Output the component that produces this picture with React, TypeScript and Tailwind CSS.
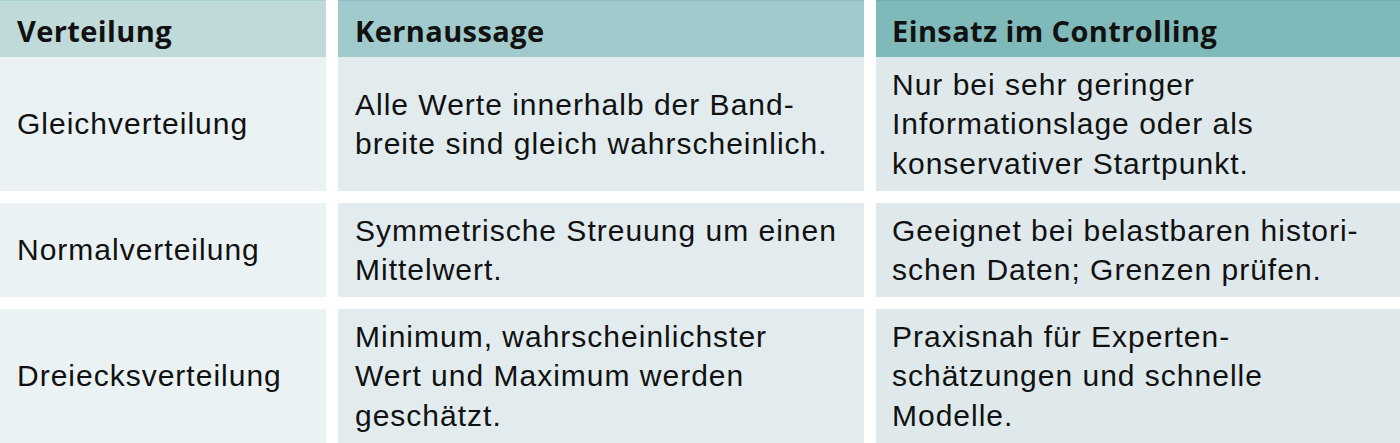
import React from "react";

type Row = { name: string; core: string[]; use: string[] };

const rows: Row[] = [
  {
    name: "Gleichverteilung",
    core: ["Alle Werte innerhalb der Band-", "breite sind gleich wahrscheinlich."],
    use: ["Nur bei sehr geringer", "Informationslage oder als", "konservativer Startpunkt."],
  },
  {
    name: "Normalverteilung",
    core: ["Symmetrische Streuung um einen", "Mittelwert."],
    use: ["Geeignet bei belastbaren histori-", "schen Daten; Grenzen prüfen."],
  },
  {
    name: "Dreiecksverteilung",
    core: ["Minimum, wahrscheinlichster", "Wert und Maximum werden", "geschätzt."],
    use: ["Praxisnah für Experten-", "schätzungen und schnelle", "Modelle."],
  },
];

const body = "font-['Liberation_Sans',Arial,sans-serif] text-[30px] leading-[39.5px] tracking-[1px] text-[#111]";
const head = "font-['Open_Sans',sans-serif] font-bold text-[29px] tracking-[0.4px] text-[#111]";

const Lines = ({ lines }: { lines: string[] }) => (
  <div className="whitespace-nowrap">
    {lines.map((l, i) => (
      <div key={i}>{l}</div>
    ))}
  </div>
);

export default function App() {
  return (
    <div className="w-[1400px] h-[443px] bg-white overflow-hidden">
      {/* Kopfzeile */}
      <div className="grid grid-cols-[326px_526px_524px] gap-x-3 h-[57px]">
        <div className={`${head} flex items-center pl-[17px] pt-[3px] bg-[#bfdad9] border-t border-[#aacfcf]`}>Verteilung</div>
        <div className={`${head} flex items-center pl-[17px] pt-[3px] bg-[#a0cacb] border-t border-[#8fc0c1]`}>Kernaussage</div>
        <div className={`${head} flex items-center pl-[16px] pt-[3px] bg-[#80b9b9] border-t border-[#72b0b0]`}>Einsatz im Controlling</div>
      </div>

      {rows.map((r, i) => (
        <div
          key={r.name}
          className={`grid grid-cols-[326px_526px_524px] gap-x-3 ${i === 0 ? "" : "mt-3"} ${i === 1 ? "h-[94px]" : "h-[134px]"}`}
        >
          <div className={`${body} flex items-center pl-[17px] bg-[#eaf2f4]`}>{r.name}</div>
          <div className={`${body} flex items-center pl-[17px] bg-[#e2ecee]`}>
            <Lines lines={r.core} />
          </div>
          <div className={`${body} flex items-center pl-[16px] bg-[#dfe9eb]`}>
            <Lines lines={r.use} />
          </div>
        </div>
      ))}
    </div>
  );
}
